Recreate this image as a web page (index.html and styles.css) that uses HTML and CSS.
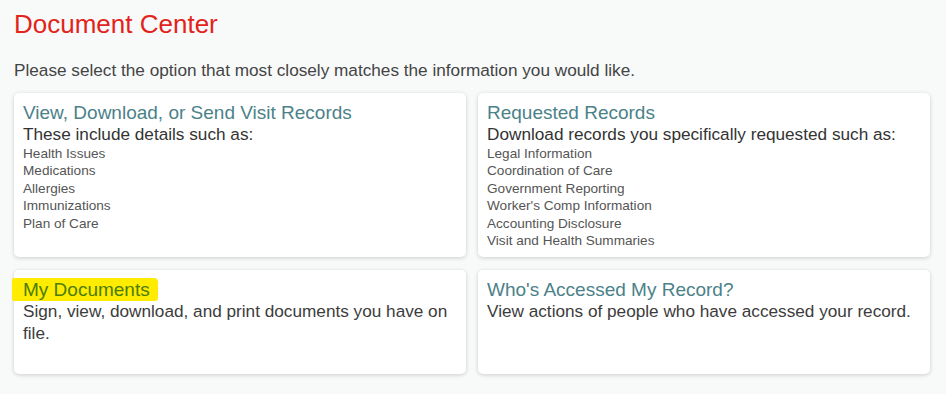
FILE: index.html
```html
<!DOCTYPE html>
<html lang="en">
<head>
<meta charset="utf-8">
<title>Document Center</title>
<link rel="stylesheet" href="styles.css">
</head>
<body>
<main class="page">
  <h1 class="page-title">Document Center</h1>
  <p class="intro">Please select the option that most closely matches the information you would like.</p>
  <div class="cards">
    <section class="card">
      <h2 class="card-title">View, Download, or Send Visit Records</h2>
      <p class="card-sub">These include details such as:</p>
      <ul class="card-list">
        <li>Health Issues</li>
        <li>Medications</li>
        <li>Allergies</li>
        <li>Immunizations</li>
        <li>Plan of Care</li>
      </ul>
    </section>
    <section class="card">
      <h2 class="card-title">Requested Records</h2>
      <p class="card-sub">Download records you specifically requested such as:</p>
      <ul class="card-list">
        <li>Legal Information</li>
        <li>Coordination of Care</li>
        <li>Government Reporting</li>
        <li>Worker's Comp Information</li>
        <li>Accounting Disclosure</li>
        <li>Visit and Health Summaries</li>
      </ul>
    </section>
    <section class="card card-short">
      <h2 class="card-title"><span class="highlight">My Documents</span></h2>
      <p class="card-desc">Sign, view, download, and print documents you have on file.</p>
    </section>
    <section class="card card-short">
      <h2 class="card-title">Who's Accessed My Record?</h2>
      <p class="card-desc">View actions of people who have accessed your record.</p>
    </section>
  </div>
</main>
</body>
</html>
```

FILE: styles.css
```css
html, body {
  margin: 0;
  padding: 0;
}
body {
  background: #f8fafa;
  font-family: "Liberation Sans", Arial, sans-serif;
  color: #333;
}
.page {
  padding: 8px 16px 20px 14px;
}
.page-title {
  margin: 0;
  font-size: 26px;
  font-weight: normal;
  line-height: 32px;
  color: #e2231a;
}
.intro {
  margin: 20px 0 13px;
  font-size: 17.2px;
  line-height: 20px;
  color: #444;
}
.cards {
  display: grid;
  grid-template-columns: 452px 452px;
  column-gap: 12px;
  row-gap: 13px;
}
.card {
  background: #fff;
  border-radius: 5px;
  box-shadow: 0 1px 4px rgba(0, 0, 0, 0.18);
  padding: 8px 9px 8px 9px;
  box-sizing: border-box;
}
.card-short {
  min-height: 104px;
}
.card-title {
  margin: 0;
  font-size: 19px;
  font-weight: normal;
  line-height: 23px;
  color: #4b8189;
}
.card-sub {
  margin: 0;
  font-size: 17.2px;
  line-height: 21px;
  color: #333;
}
.card-desc {
  margin: 0;
  font-size: 17.2px;
  line-height: 21.5px;
  color: #3c3c3c;
}
.card-list {
  list-style: none;
  margin: 0;
  padding: 0;
  font-size: 13.6px;
  line-height: 17.4px;
  color: #555;
}
.highlight {
  display: inline-block;
  background: #ffec00;
  color: #4a7d00;
  margin-left: -11px;
  padding: 0 8px 0 11px;
  border-radius: 2px 4px 3px 2px;
}
```
